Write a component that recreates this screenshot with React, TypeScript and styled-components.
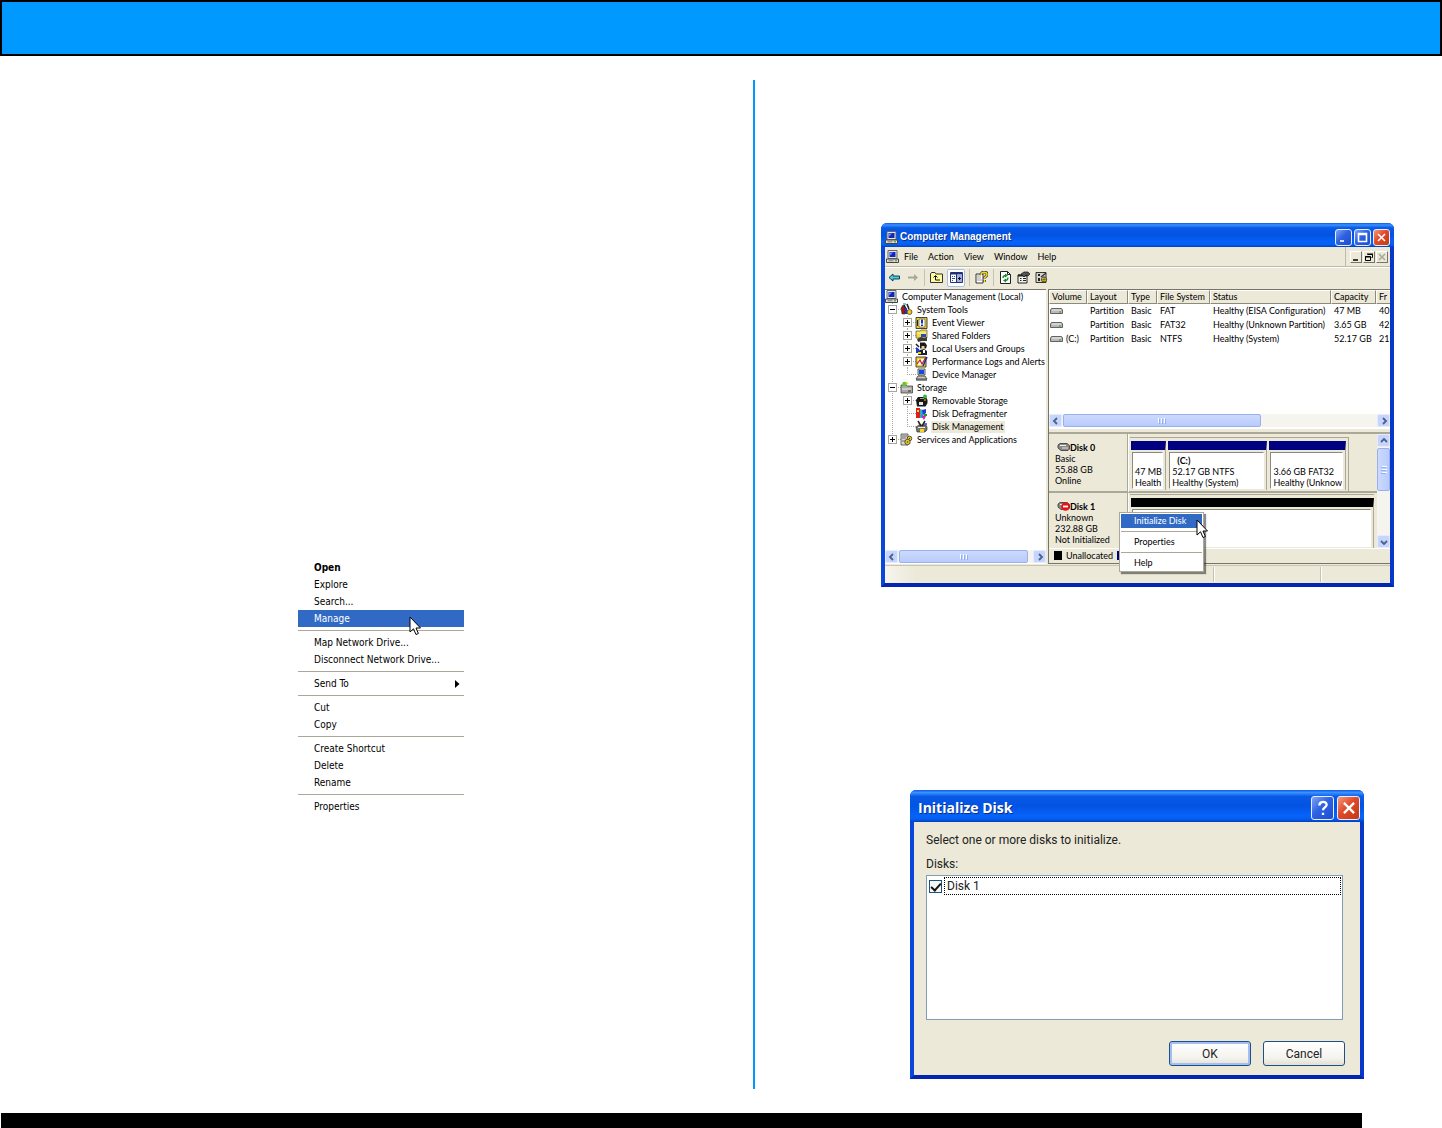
import React from 'react';
import styled, { createGlobalStyle, css } from 'styled-components';

const small = '"Lato", "Liberation Sans", sans-serif';
const beige = '#ece9d8';
const navy = '#000080';
const selected = '#316ac5';

const GlobalStyle = createGlobalStyle`
  * { box-sizing: border-box; }
  body { margin: 0; background: #fff; color: #000; font-family: ${small}; font-variant-ligatures: none; }
  button { font: inherit; font-variant-ligatures: none; color: inherit; padding: 0; margin: 0; border: 0; background: none; text-align: left; }
  ul { list-style: none; margin: 0; padding: 0; }
  h2, p { margin: 0; }
  svg { display: block; flex: none; }
`;

/* ---------- page ---------- */

const Banner = styled.header`
  height: 56px;
  background: #0099ff;
  border: 2px solid #000;
`;

const Columns = styled.main`
  display: grid;
  grid-template-columns: 753fr 2px 687fr;
  margin-top: 24px;
`;

const Divider = styled.div`
  background: #0099ff;
`;

const LeftColumn = styled.section`
  padding: 479px 0 0 298px;
`;

const RightColumn = styled.section`
  display: flex;
  flex-direction: column;
  gap: 203px;
  padding: 143px 48px 10px 126px;
`;

const FooterBar = styled.footer`
  height: 15px;
  margin: 24px 80px 0 1px;
  background: #000;
`;

/* ---------- menus ---------- */

const ShortcutMenu = styled.ul`
  width: 166px;
  font: 10px/17px "DejaVu Sans Condensed", "DejaVu Sans", sans-serif;
`;

const MenuItem = styled.button<{ $active?: boolean; $strong?: boolean }>`
  display: flex;
  align-items: center;
  justify-content: space-between;
  width: 100%;
  height: 17px;
  padding: 0 4px 0 16px;
  white-space: nowrap;
  font-weight: ${p => (p.$strong ? 700 : 400)};
  ${p => p.$active && css`background: ${selected}; color: #fff;`}
`;

const MenuLine = styled.li`
  height: 7px;
  padding-top: 3px;
  &::after { content: ''; display: block; height: 1px; background: #aca899; }
`;

const CursorAnchor = styled.li`
  position: relative;
`;

const PointerSpot = styled.span<{ $x: number; $y: number }>`
  position: absolute;
  z-index: 2;
  left: ${p => p.$x}px;
  top: ${p => p.$y}px;
`;

const PopupMenu = styled.ul`
  position: absolute;
  z-index: 1;
  left: 70px;
  top: 78px;
  width: 85px;
  padding: 1px;
  background: #fff;
  border: 1px solid #aca899;
  box-shadow: 2px 2px 1px rgba(0, 0, 0, 0.45);
  line-height: 14px;
  ${MenuItem} { height: 14px; padding: 0 0 0 13px; }
`;

/* ---------- window chrome ---------- */

const Window = styled.section`
  display: flex;
  flex-direction: column;
  background: ${beige};
  border: 4px solid #0a46dc;
  border-top: 0;
  border-right-color: #0838c8;
  border-bottom-color: #0424b4;
  border-radius: 6px 6px 0 0;
  font-size: 9px;
`;

const TitleBar = styled.header<{ $large?: boolean }>`
  display: flex;
  align-items: center;
  gap: ${p => (p.$large ? 3 : 2)}px;
  height: ${p => (p.$large ? 32 : 24)}px;
  margin: 0 -4px;
  padding: ${p => (p.$large ? '3px 4px 0 8px' : '4px 4px 0 4px')};
  border-radius: 6px 6px 0 0;
  color: #fff;
  background: linear-gradient(#0a5be6 0, #3a93ff 8%, #0a5ae8 20%, #0353e3 50%, #0563fa 80%, #0560f0 90%, #0340c0 100%);
`;

const Title = styled.h2<{ $large?: boolean }>`
  flex: 1;
  font: ${p => (p.$large ? '700 14px/20px "Open Sans", "Noto Sans"' : '700 10px/16px "Liberation Sans"')}, sans-serif;
  text-shadow: 1px 1px 0 #0a2f8c;
  white-space: nowrap;
`;

const CaptionButton = styled.button<{ $close?: boolean; $large?: boolean }>`
  display: grid;
  place-items: center;
  width: ${p => (p.$large ? 23 : 17)}px;
  height: ${p => (p.$large ? 24 : 17)}px;
  border: 1px solid #e8eefc;
  border-radius: 3px;
  background: ${p => (p.$close
    ? 'linear-gradient(135deg, #f09a7c, #e0492a 45%, #c23a12)'
    : 'linear-gradient(135deg, #7ea4f6, #2f62e2 45%, #1c4fd0)')};
`;

const MenuBar = styled.nav`
  display: flex;
  align-items: center;
  height: 20px;
  padding: 0 2px 0 1px;
  border-bottom: 1px solid #bfbba8;
  box-shadow: 0 1px 0 #fff;
`;

const MenuBarItem = styled.button`
  padding: 0 5px;
  line-height: 14px;
`;

const MdiButtons = styled.div`
  display: flex;
  align-items: center;
  gap: 1px;
  height: 19px;
  margin-left: auto;
  padding-left: 4px;
  border-left: 1px solid #bfbba8;
`;

const MdiButton = styled.button`
  display: grid;
  place-items: center;
  width: 12px;
  height: 12px;
  background: ${beige};
  border: 1px solid;
  border-color: #fff #77746a #77746a #fff;
`;

const ToolBar = styled.div`
  display: flex;
  align-items: center;
  gap: 3px;
  height: 21px;
  padding-left: 2px;
`;

const ToolButton = styled.button<{ $on?: boolean }>`
  display: grid;
  place-items: center;
  width: ${p => (p.$on ? 18 : 15)}px;
  height: 18px;
  ${p => p.$on && css`
    background: #fff;
    border: 1px solid #a9bfe4;
    border-radius: 2px;
  `}
`;

const ToolLine = styled.span`
  width: 1px;
  height: 17px;
  margin: 0 1px;
  background: #c5c2b2;
`;

const Panes = styled.div`
  display: grid;
  grid-template-columns: 161px minmax(0, 1fr);
  column-gap: 2px;
  height: 275px;
  margin-top: 1px;
`;

const StatusBar = styled.footer`
  display: grid;
  grid-template-columns: 1fr 107px 69px;
  height: 18px;
  margin-top: 1px;
  border-top: 1px solid #c8c5b4;
  background: linear-gradient(90deg, #f6f5ee, ${beige} 30px);
`;

const StatusCell = styled.span`
  margin: 1px 0;
  border-right: 1px solid #c5c2b2;
  box-shadow: 1px 0 0 #fff;
  &:last-child { border: 0; box-shadow: none; }
`;

/* ---------- scroll bars ---------- */

const ScrollTrack = styled.div<{ $vertical?: boolean }>`
  display: flex;
  flex: none;
  gap: 1px;
  flex-direction: ${p => (p.$vertical ? 'column' : 'row')};
  ${p => (p.$vertical ? 'width: 13px;' : 'height: 13px;')}
  background: #f5f4ee;
`;

const ScrollButton = styled.button`
  display: grid;
  place-items: center;
  flex: none;
  width: 13px;
  height: 13px;
  background: #c6d5fd;
  border: 1px solid #e4ebfe;
  border-radius: 2px;
`;

const ScrollThumb = styled.div<{ $size: string; $vertical?: boolean }>`
  display: grid;
  place-items: center;
  flex: 0 1 ${p => p.$size};
  background: linear-gradient(${p => (p.$vertical ? '90deg' : '180deg')}, #cddafe, #b9cbfb);
  border: 1px solid #98b1ee;
  border-radius: 2px;
  svg { ${p => (p.$vertical ? 'transform: rotate(90deg);' : '')} }
`;

const ScrollSpace = styled.span`
  flex: 1;
`;

/* ---------- tree ---------- */

const TreePane = styled.div`
  display: flex;
  flex-direction: column;
  justify-content: space-between;
  min-width: 0;
  overflow: hidden;
  background: #fff;
  border-top: 1px solid #77746a;
  border-bottom: 1px solid #fff;
`;

const Branch = styled.ul`
  & & { margin-left: 15px; }
`;

const Leaf = styled.li<{ $root?: boolean }>`
  ${p => !p.$root && css`
    background:
      repeating-linear-gradient(#a8a8a8 0 1px, transparent 1px 2px) 7px 0 / 1px 100% no-repeat,
      repeating-linear-gradient(90deg, #a8a8a8 0 1px, transparent 1px 2px) 7px 6px / 9px 1px no-repeat;
    &:last-child {
      background:
        repeating-linear-gradient(#a8a8a8 0 1px, transparent 1px 2px) 7px 0 / 1px 7px no-repeat,
        repeating-linear-gradient(90deg, #a8a8a8 0 1px, transparent 1px 2px) 7px 6px / 9px 1px no-repeat;
    }
  `}
`;

const TreeRow = styled.div<{ $root?: boolean }>`
  display: flex;
  align-items: center;
  gap: 3px;
  height: 13px;
  padding-left: ${p => (p.$root ? 0 : 3)}px;
`;

const Expander = styled.button`
  display: grid;
  place-items: center;
  flex: none;
  width: 9px;
  height: 9px;
  background: #fff;
  border: 1px solid #a8a69c;
`;

const ExpanderGap = styled.span`
  flex: none;
  width: 9px;
`;

const TreeLabel = styled.button<{ $active?: boolean }>`
  height: 12px;
  padding: 0 1px;
  line-height: 12px;
  white-space: nowrap;
  ${p => p.$active && css`background: ${beige};`}
`;

/* ---------- volume list ---------- */

const RightPane = styled.div`
  display: flex;
  flex-direction: column;
  min-width: 0;
  border: 1px solid #77746a;
  border-width: 1px 0 1px 1px;
`;

const VolumeArea = styled.div`
  flex: 1;
  overflow: hidden;
  background: #fff;
`;

const VolumeTable = styled.table`
  width: 100%;
  table-layout: fixed;
  border-collapse: separate;
  border-spacing: 0;
  text-align: left;
  white-space: nowrap;
`;

const Head = styled.th`
  height: 14px;
  padding: 0 0 0 2px;
  overflow: hidden;
  font-weight: 400;
  line-height: 12px;
  background: ${beige};
  border: 1px solid;
  border-color: #fff #8d8a7c #8d8a7c #fff;
  &:last-child { border-right: 0; }
`;

const Cell = styled.td`
  height: 14px;
  padding: 0 0 0 3px;
  overflow: hidden;
  line-height: 14px;
  &:first-child { padding-left: 1px; }
`;

const VolumeName = styled.span`
  display: flex;
  align-items: center;
  gap: 3px;
`;

const Splitter = styled.div`
  height: 7px;
  background: ${beige};
  border-top: 2px solid #fff;
  border-bottom: 2px solid #aca899;
`;

/* ---------- disk map ---------- */

const DiskMap = styled.div`
  position: relative;
  display: flex;
  height: 114px;
`;

const DiskRows = styled.div`
  flex: 1;
  min-width: 0;
`;

const DiskRow = styled.div<{ $last?: boolean }>`
  display: grid;
  grid-template-columns: 79px minmax(0, 1fr);
  height: ${p => (p.$last ? 55 : 59)}px;
  border-bottom: ${p => (p.$last ? 0 : 2)}px solid #aca899;
`;

const DiskInfo = styled.div`
  padding: 8px 0 0 6px;
  line-height: 11px;
  border-right: 1px solid #aca899;
  box-shadow: 1px 0 0 #fff;
  white-space: nowrap;
`;

const DiskName = styled.strong`
  display: flex;
  align-items: center;
  padding-left: 2px;
`;

const Partitions = styled.div<{ $full?: boolean }>`
  display: flex;
  gap: 2px;
  margin: ${p => (p.$full ? '1px 3px 0 2px' : '3px 28px 0 2px')};
  padding: ${p => (p.$full ? '3px 0 0 1px' : '3px 2px 2px 1px')};
  border-top: 1px solid #aca899;
  ${p => !p.$full && css`border-right: 1px solid #aca899;`}
`;

const Partition = styled.div<{ $grow: number; $free?: boolean }>`
  display: flex;
  flex-direction: column;
  flex: ${p => p.$grow} 1 0;
  min-width: 0;
  border-top: 9px solid ${p => (p.$free ? '#000' : navy)};
  border-right: 1px solid #aca899;
`;

const PartitionBox = styled.div`
  flex: 1;
  margin: 2px 2px 1px 1px;
  padding: 2px 0 0 2px;
  overflow: hidden;
  background: #fff;
  border: 1px solid;
  border-color: #8d8a7c #fff #fff #8d8a7c;
  line-height: 11px;
  white-space: nowrap;
`;

const PartitionLine = styled.div<{ $bold?: boolean }>`
  min-height: 11px;
  padding-left: ${p => (p.$bold ? 5 : 0)}px;
  font-weight: ${p => (p.$bold ? 700 : 400)};
`;

const Legend = styled.div`
  display: flex;
  align-items: center;
  gap: 4px;
  height: 15px;
  padding: 0 0 2px 5px;
  border-top: 1px solid #fff;
`;

const Swatch = styled.span<{ $color: string }>`
  width: 8px;
  height: 9px;
  background: ${p => p.$color};
`;

/* ---------- initialize dialog ---------- */

const DialogSlot = styled.div`
  margin: 0 30px 0 29px;
`;

const DialogBody = styled.form`
  display: flex;
  flex-direction: column;
  padding: 9px 15px 9px 12px;
  font: 12px/18px "Roboto", "Liberation Sans", sans-serif;
  color: #222;
`;

const ListCaption = styled.p`
  margin-top: 6px;
`;

const DiskList = styled.div`
  height: 145px;
  margin: 2px 2px 0 0;
  padding: 1px;
  background: #fff;
  border: 1px solid #7f9db9;
`;

const DiskOption = styled.label`
  display: flex;
  align-items: center;
  gap: 2px;
  height: 18px;
  padding-left: 1px;
`;

const Tick = styled.input`
  appearance: none;
  flex: none;
  width: 13px;
  height: 13px;
  margin: 0;
  border: 1px solid #1c5180;
  background: #f6f6f2;
  &:checked::after {
    content: '';
    display: block;
    width: 8px;
    height: 4px;
    margin: 2px 0 0 1px;
    border: solid #111;
    border-width: 0 0 2px 2px;
    transform: rotate(-48deg);
  }
`;

const FocusText = styled.span`
  flex: 1;
  height: 18px;
  padding-left: 2px;
  border: 1px dotted #000;
  line-height: 17px;
`;

const Actions = styled.div`
  display: flex;
  justify-content: flex-end;
  gap: 12px;
  margin-top: 21px;
`;

const PushButton = styled.button<{ $primary?: boolean }>`
  width: 82px;
  height: 25px;
  text-align: center;
  background: linear-gradient(#fff, #f4f3ee 70%, #e2dfd2);
  border: 1px solid #1f4f86;
  border-radius: 3px;
  ${p => p.$primary && css`box-shadow: inset 0 0 0 2px #a3bff2;`}
`;

/* ---------- drawings ---------- */

const Pointer = () => (
  <svg width="12" height="20" viewBox="0 0 12 20">
    <path d="M1 1v15l3.5-3.2L7 18.5l2.4-1L7 12h4.5z" fill="#fff" stroke="#000" strokeWidth="1" />
  </svg>
);

const Arrow = ({ dir, color = '#4d6185' }: { dir: 'l' | 'r' | 'u' | 'd'; color?: string }) => {
  const d = { l: 'M5 1 2 4l3 3', r: 'M3 1l3 3-3 3', u: 'M1 5l3-3 3 3', d: 'M1 3l3 3 3-3' }[dir];
  return <svg width="8" height="8" viewBox="0 0 8 8"><path d={d} fill="none" stroke={color} strokeWidth="1.8" /></svg>;
};

const Grip = () => (
  <svg width="8" height="6" viewBox="0 0 8 6"><path d="M.5 0v5M3.500 0v5M6.500 0v5" stroke="#fff" /><path d="M1.500 1v5M4.500 1v5M7.500 1v5" stroke="#8cb0f8" /></svg>
);

type IconName = 'pc' | 'tools' | 'event' | 'share' | 'users' | 'perf' | 'device' | 'storage' | 'removable' | 'defrag' | 'disk' | 'services';

const Glyph = ({ name }: { name: IconName }) => {
  const art: Record<IconName, React.ReactNode> = {
    pc: (
      <>
        <path d="M2 .5h9v8H2z" fill="#e8e8e0" stroke="#666" />
        <path d="M3.500 2h6v5h-6z" fill="#1028c0" />
        <path d="M4 2.500h3l-3 3z" fill="#6d8cff" />
        <path d="M.5 9h12v3.500H.5z" fill="#e6e3d8" stroke="#444" />
        <path d="M2.500 10.800h5" stroke="#777" /><path d="M9 10.800h2" stroke="#1a8c1a" />
      </>
    ),
    device: (
      <>
        <path d="M3 1h7v6H3z" fill="#ddd" stroke="#333" strokeWidth=".8" /><path d="M4 2h5v4H4z" fill="#1848e0" />
        <path d="M3 8h7l2 3H1z" fill="#c9c6b8" stroke="#333" strokeWidth=".8" /><path d="M1 12h11" stroke="#222" />
      </>
    ),
    tools: (
      <>
        <path d="M1 5l2-3 2 3v6H2z" fill="#a01818" stroke="#222" strokeWidth=".5" />
        <path d="M4 2l4 8M7 1l2 5" stroke="#222" strokeWidth="1.600" /><path d="M5 5h2v6H5z" fill="#1c36c8" />
        <circle cx="9.500" cy="9" r="2.500" fill="#f0c814" stroke="#333" strokeWidth=".7" /><path d="M3 1h3" stroke="#39b8c8" strokeWidth="1.500" />
      </>
    ),
    event: (
      <>
        <path d="M1 1.500h11v11H1z" fill="#f2d41c" stroke="#333" strokeWidth=".9" /><path d="M4 3h6v8H4z" fill="#fff" stroke="#444" strokeWidth=".6" />
        <path d="M7 3.500v4" stroke="#1830d8" strokeWidth="2" /><path d="M7 8.500v1.500" stroke="#1830d8" strokeWidth="2" /><path d="M2.500 4v6" stroke="#222" />
      </>
    ),
    share: (
      <>
        <path d="M1 2h4l1-1h6v8H1z" fill="#f3dc3c" stroke="#666" strokeWidth=".8" /><path d="M2 4h9" stroke="#fff7a8" />
        <path d="M2 10l4-2 3 1 3-1v4H7l-4 1z" fill="#403a34" /><path d="M6 5h5v3H6z" fill="#2848c8" />
      </>
    ),
    users: (
      <>
        <path d="M5 .5h5l2 3-1 3H5z" fill="#1a1a1a" /><path d="M6.500 4h3v3h-3z" fill="#f2c49a" />
        <path d="M1 5l3 2 2 4H1z" fill="#2038c8" /><path d="M5 8l4-1 3 2v4H3z" fill="#18242c" /><path d="M8 8h2v3H8z" fill="#fff" /><path d="M1 2l3 3" stroke="#222" strokeWidth="1.500" /><path d="M3 10h3v2H3z" fill="#f2d41c" />
      </>
    ),
    perf: (
      <>
        <path d="M1 2h10v10H1z" fill="#f2d41c" stroke="#333" strokeWidth=".9" /><path d="M3 4h6v6H3z" fill="#fff" />
        <path d="M2 9l3-4 2 4 4-7" fill="none" stroke="#c81c1c" strokeWidth="1.200" /><path d="M8 11l4-9" stroke="#1c28a8" strokeWidth="1.500" />
      </>
    ),
    storage: (
      <>
        <path d="M1 4h5l1 1h5.500v7H1z" fill="#aaa9a0" stroke="#444" strokeWidth=".8" /><path d="M2 8h9" stroke="#eee" /><path d="M8 10h3" stroke="#333" />
        <circle cx="4.500" cy="3" r="2.300" fill="#5cc83c" /><path d="M6 1l2 2" stroke="#f2d41c" strokeWidth="1.500" />
      </>
    ),
    removable: (
      <>
        <path d="M1 6l2-3h8l1.500 3v3l-2 3.500H2z" fill="#181818" /><path d="M4 8h4v3H4z" fill="#e4e4dc" /><path d="M5 4.500h4" stroke="#999" />
        <circle cx="10" cy="2.500" r="2" fill="#38b838" /><path d="M9 6h2" stroke="#f2d41c" />
      </>
    ),
    defrag: (
      <>
        <path d="M1 1h4v10H1z" fill="#e01c1c" /><path d="M5 2l3 1v8H5z" fill="#1cb4c8" /><path d="M7 3l4-1v4L8 8z" fill="#2838d8" />
        <path d="M6 8l5 1-2 4z" fill="#d41cb4" /><path d="M2 3h2v2H2z" fill="#ffe41c" /><path d="M9 7h3v2H9z" fill="#1c9c1c" />
      </>
    ),
    disk: (
      <>
        <path d="M1 7l3-2h7l1 2v3l-2 2H2z" fill="#77756c" stroke="#222" strokeWidth=".6" /><path d="M3 7.500h7" stroke="#e8e8e8" />
        <path d="M3 1l3 5M10 1L7 6" stroke="#222" strokeWidth="1.500" /><path d="M5 9h4v3H5z" fill="#f2d41c" /><path d="M9 4h3" stroke="#2848d8" strokeWidth="1.500" />
      </>
    ),
    services: (
      <>
        <path d="M1 1h7v11H1z" fill="#d8d6ca" stroke="#444" strokeWidth=".8" /><path d="M2 3h5M2 5h4M2 8h3" stroke="#555" strokeWidth=".8" />
        <circle cx="9.500" cy="5.500" r="2.300" fill="#f2d41c" stroke="#333" strokeWidth=".8" /><circle cx="7.500" cy="9" r="2.700" fill="#f2d41c" stroke="#333" strokeWidth=".8" />
        <circle cx="7.500" cy="9" r=".8" fill="#333" /><circle cx="9.500" cy="5.500" r=".7" fill="#333" />
      </>
    ),
  };
  return <svg width="13" height="13" viewBox="0 0 13 13">{art[name]}</svg>;
};

const Drive = () => (
  <svg width="13" height="8" viewBox="0 0 13 8">
    <path d="M1.500 1.500h10l1 1.500v3.500H.5V3z" fill="#b8b8b4" stroke="#555" strokeWidth=".9" />
    <path d="M2 3h9" stroke="#eee" /><path d="M9 5h2" stroke="#3a9a3a" />
  </svg>
);

const DiskBadge = ({ error }: { error?: boolean }) => (
  <svg width="13" height="9" viewBox="0 0 13 9">
    <path d="M1 2l2-1.500h7l2.500 2V6L11 7.500H4L1 5z" fill="#8a8a88" stroke="#333" strokeWidth=".8" />
    <path d="M3 2.500h6" stroke="#eee" />
    {error
      ? <><ellipse cx="8.500" cy="4.500" rx="4.300" ry="4.300" fill="#e61414" /><path d="M6 4.500h5" stroke="#fff" strokeWidth="1.800" /></>
      : <path d="M5 5h6" stroke="#ddd" />}
  </svg>
);

const ToolGlyph = ({ kind }: { kind: 'back' | 'next' | 'up' | 'panes' | 'help' | 'refresh' | 'props' | 'settings' }) => {
  const art = {
    back: <path d="M1 6.500L5 3v2h6.500v3H5v2z" fill="#3fd0d8" stroke="#0c2c50" strokeWidth=".9" />,
    next: <path d="M12 6.500L8 3v2.500H2v2h6V10z" fill="#a9a79b" />,
    up: <><path d="M.5 11.500V3l1-1.500H5L6 3h6.500v8.500z" fill="#fff9a0" stroke="#333" strokeWidth="1" /><path d="M5.500 9V5M3.500 6.500l2-2 2 2M5.500 9H10" fill="none" stroke="#111" /></>,
    panes: <><path d="M.5 1.500h12v10H.5z" fill="#fff" stroke="#22307c" /><path d="M1 2.500h11" stroke="#22307c" strokeWidth="2" /><path d="M6.500 3v8" stroke="#22307c" /><path d="M2 5.500h1M4 5.500h1M2 7.500h3M2 9.500h1" stroke="#3a4a9c" /><path d="M7 4h5v7H7z" fill="#a4aede" /><path d="M8 7.500h3M9.500 6v3" stroke="#111" /></>,
    help: <><path d="M1 3h7v9H1z" fill="#fff" stroke="#333" /><path d="M2 5h4M2 7h4M2 9h5" stroke="#888" strokeWidth=".8" /><path d="M6 4c0-4 6-3.500 6-.5 0 2-2.500 1.800-2.500 4M9.500 9v2" fill="none" stroke="#333" strokeWidth="2.800" /><path d="M6 4c0-4 6-3.500 6-.5 0 2-2.500 1.800-2.500 4M9.500 9v2" fill="none" stroke="#f4dc1c" strokeWidth="1.500" /></>,
    refresh: <><path d="M1.500.5h7l3 3v9h-10z" fill="#fff" stroke="#222" /><path d="M8.500.5v3h3" fill="none" stroke="#222" /><path d="M4 7c0-2 1-2.500 3-2.500M9 6.500c0 2-1 3-3 3" fill="none" stroke="#178c2c" strokeWidth="1.300" /><path d="M6 2.500l3 2-3 2zM7 7.500l-3 2 3 2z" fill="#178c2c" /></>,
    props: <><path d="M1 4h9v8H1z" fill="#f4f4ec" stroke="#222" /><path d="M1 4.500h9" stroke="#222" strokeWidth="2" /><path d="M3 7.500h1.500M6 7.500h3M3 9.500h1.500M6 9.500h3" stroke="#222" /><path d="M4 3l3-2h4l2 2-2 2-2-1-2 2z" fill="#555" stroke="#111" strokeWidth=".7" /></>,
    settings: <><path d="M1 1.500h10v10H1z" fill="#d8d6ca" stroke="#333" /><path d="M3 3h2v2H3zM3 7h2v3H3z" fill="#222" /><path d="M6 6l5-4" stroke="#333" strokeWidth="1.500" /><circle cx="9" cy="8.500" r="2.600" fill="#f0d820" stroke="#333" strokeWidth=".8" /><path d="M6 9l6-1M9 5.500v6" stroke="#333" strokeWidth=".6" /></>,
  };
  return <svg width="13" height="13" viewBox="0 0 13 13">{art[kind]}</svg>;
};

const CaptionGlyph = ({ kind, size }: { kind: 'min' | 'max' | 'close' | 'help'; size: number }) => {
  const d = {
    min: 'M2 9h4',
    max: 'M1.500 1.500h8v8h-8zM1.500 2.500h8',
    close: 'M2 2l7 7M9 2l-7 7',
    help: 'M3 3.800c0-3.300 5-3.300 5-.5 0 1.800-2.500 1.800-2.500 3.700M5.500 8.700v1.600',
  }[kind];
  return <svg width={size} height={size} viewBox="0 0 11 11"><path d={d} fill="none" stroke="#fff" strokeWidth="1.600" /></svg>;
};

/* ---------- data ---------- */

type Node = { label: string; icon: IconName; mark?: '+' | '-'; active?: boolean; children?: Node[] };

const tree: Node = {
  label: 'Computer Management (Local)', icon: 'pc', children: [
    {
      label: 'System Tools', icon: 'tools', mark: '-', children: [
        { label: 'Event Viewer', icon: 'event', mark: '+' },
        { label: 'Shared Folders', icon: 'share', mark: '+' },
        { label: 'Local Users and Groups', icon: 'users', mark: '+' },
        { label: 'Performance Logs and Alerts', icon: 'perf', mark: '+' },
        { label: 'Device Manager', icon: 'device' },
      ],
    },
    {
      label: 'Storage', icon: 'storage', mark: '-', children: [
        { label: 'Removable Storage', icon: 'removable', mark: '+' },
        { label: 'Disk Defragmenter', icon: 'defrag' },
        { label: 'Disk Management', icon: 'disk', active: true },
      ],
    },
    { label: 'Services and Applications', icon: 'services', mark: '+' },
  ],
};

const volumes = [
  ['', 'Partition', 'Basic', 'FAT', 'Healthy (EISA Configuration)', '47 MB', '40'],
  ['', 'Partition', 'Basic', 'FAT32', 'Healthy (Unknown Partition)', '3.65 GB', '42'],
  ['(C:)', 'Partition', 'Basic', 'NTFS', 'Healthy (System)', '52.17 GB', '21'],
];

const volumeColumns: [string, number?][] = [
  ['Volume', 38], ['Layout', 41], ['Type', 29], ['File System', 53], ['Status', 121], ['Capacity', 45], ['Fr'],
];

const shortcutGroups = [
  ['Open', 'Explore', 'Search...', 'Manage'],
  ['Map Network Drive...', 'Disconnect Network Drive...'],
  ['Send To'],
  ['Cut', 'Copy'],
  ['Create Shortcut', 'Delete', 'Rename'],
  ['Properties'],
];

/* ---------- pieces ---------- */

const TreeItem = ({ node, root }: { node: Node; root?: boolean }) => (
  <Leaf $root={root}>
    <TreeRow $root={root}>
      {node.mark && (
        <Expander aria-label={node.mark === '+' ? 'Expand' : 'Collapse'}>
          <svg width="5" height="5" viewBox="0 0 5 5"><path d={node.mark === '+' ? 'M0 2.500h5M2.500 0v5' : 'M0 2.500h5'} stroke="#000" /></svg>
        </Expander>
      )}
      {!node.mark && !root && <ExpanderGap />}
      <Glyph name={node.icon} />
      <TreeLabel $active={node.active}>{node.label}</TreeLabel>
    </TreeRow>
    {node.children && !root && <Branch>{node.children.map(c => <TreeItem key={c.label} node={c} />)}</Branch>}
  </Leaf>
);

const ShortcutList = () => (
  <ShortcutMenu>
    {shortcutGroups.map((group, g) => (
      <React.Fragment key={group[0]}>
        {g > 0 && <MenuLine role="separator" />}
        {group.map(label => (
          <CursorAnchor key={label}>
            <MenuItem $strong={label === 'Open'} $active={label === 'Manage'}>
              {label}
              {label === 'Send To' && <svg width="5" height="8" viewBox="0 0 5 8"><path d="M0 0l4.500 4L0 8z" /></svg>}
            </MenuItem>
            {label === 'Manage' && <PointerSpot $x={111} $y={6}><Pointer /></PointerSpot>}
          </CursorAnchor>
        ))}
      </React.Fragment>
    ))}
  </ShortcutMenu>
);

const ManagementWindow = () => (
  <Window>
    <TitleBar>
      <Glyph name="pc" />
      <Title>Computer Management</Title>
      <CaptionButton aria-label="Minimize"><CaptionGlyph kind="min" size={11} /></CaptionButton>
      <CaptionButton aria-label="Maximize"><CaptionGlyph kind="max" size={11} /></CaptionButton>
      <CaptionButton $close aria-label="Close"><CaptionGlyph kind="close" size={11} /></CaptionButton>
    </TitleBar>
    <MenuBar>
      <Glyph name="pc" />
      {['File', 'Action', 'View', 'Window', 'Help'].map(m => <MenuBarItem key={m}>{m}</MenuBarItem>)}
      <MdiButtons>
        <MdiButton aria-label="Minimize pane"><svg width="8" height="8"><path d="M1 7h5" stroke="#000" strokeWidth="1.500" /></svg></MdiButton>
        <MdiButton aria-label="Restore pane"><svg width="8" height="8"><path d="M2.500 1.500h5v3h-1M.5 3.500h5v4h-5zM2 1h6M0 4h6" fill="none" stroke="#000" /></svg></MdiButton>
        <MdiButton aria-label="Close pane"><svg width="8" height="8"><path d="M1 1l6 6M7 1L1 7" stroke="#aca899" strokeWidth="1.500" /></svg></MdiButton>
      </MdiButtons>
    </MenuBar>
    <ToolBar>
      <ToolButton aria-label="Back"><ToolGlyph kind="back" /></ToolButton>
      <ToolButton aria-label="Forward"><ToolGlyph kind="next" /></ToolButton>
      <ToolLine />
      <ToolButton aria-label="Up one level"><ToolGlyph kind="up" /></ToolButton>
      <ToolButton $on aria-label="Show tree"><ToolGlyph kind="panes" /></ToolButton>
      <ToolLine />
      <ToolButton aria-label="Help"><ToolGlyph kind="help" /></ToolButton>
      <ToolLine />
      <ToolButton aria-label="Refresh"><ToolGlyph kind="refresh" /></ToolButton>
      <ToolButton aria-label="Properties"><ToolGlyph kind="props" /></ToolButton>
      <ToolButton aria-label="Settings"><ToolGlyph kind="settings" /></ToolButton>
    </ToolBar>
    <Panes>
      <TreePane>
        <Branch>
          <TreeItem node={tree} root />
          {tree.children!.map(c => <TreeItem key={c.label} node={c} />)}
        </Branch>
        <ScrollTrack>
          <ScrollButton aria-label="Scroll left"><Arrow dir="l" /></ScrollButton>
          <ScrollThumb $size="129px"><Grip /></ScrollThumb>
          <ScrollSpace />
          <ScrollButton aria-label="Scroll right"><Arrow dir="r" /></ScrollButton>
        </ScrollTrack>
      </TreePane>
      <RightPane>
        <VolumeArea>
          <VolumeTable>
            <colgroup>{volumeColumns.map(([name, w]) => <col key={name} width={w} />)}</colgroup>
            <thead><tr>{volumeColumns.map(([name]) => <Head key={name}>{name}</Head>)}</tr></thead>
            <tbody>
              {volumes.map((row, r) => (
                <tr key={r}>
                  {row.map((text, c) => (
                    <Cell key={c}>{c === 0 ? <VolumeName><Drive />{text}</VolumeName> : text}</Cell>
                  ))}
                </tr>
              ))}
            </tbody>
          </VolumeTable>
        </VolumeArea>
        <ScrollTrack>
          <ScrollButton aria-label="Scroll left"><Arrow dir="l" /></ScrollButton>
          <ScrollThumb $size="198px"><Grip /></ScrollThumb>
          <ScrollSpace />
          <ScrollButton aria-label="Scroll right"><Arrow dir="r" /></ScrollButton>
        </ScrollTrack>
        <Splitter />
        <DiskMap>
          <DiskRows>
            <DiskRow>
              <DiskInfo>
                <DiskName><DiskBadge />Disk 0</DiskName>
                <div>Basic</div><div>55.88 GB</div><div>Online</div>
              </DiskInfo>
              <Partitions>
                <Partition $grow={35}><PartitionBox>
                  <PartitionLine /><PartitionLine>47 MB</PartitionLine><PartitionLine>Health</PartitionLine>
                </PartitionBox></Partition>
                <Partition $grow={100}><PartitionBox>
                  <PartitionLine $bold>(C:)</PartitionLine><PartitionLine>52.17 GB NTFS</PartitionLine><PartitionLine>Healthy (System)</PartitionLine>
                </PartitionBox></Partition>
                <Partition $grow={77}><PartitionBox>
                  <PartitionLine /><PartitionLine>3.66 GB FAT32</PartitionLine><PartitionLine>Healthy (Unknow</PartitionLine>
                </PartitionBox></Partition>
              </Partitions>
            </DiskRow>
            <DiskRow $last>
              <DiskInfo>
                <DiskName><DiskBadge error />Disk 1</DiskName>
                <div>Unknown</div><div>232.88 GB</div><div>Not Initialized</div>
              </DiskInfo>
              <Partitions $full>
                <Partition $grow={1} $free><PartitionBox /></Partition>
              </Partitions>
            </DiskRow>
          </DiskRows>
          <ScrollTrack $vertical>
            <ScrollButton aria-label="Scroll up"><Arrow dir="u" /></ScrollButton>
            <ScrollThumb $vertical $size="43px"><Grip /></ScrollThumb>
            <ScrollSpace />
            <ScrollButton aria-label="Scroll down"><Arrow dir="d" /></ScrollButton>
          </ScrollTrack>
          <PopupMenu>
            <CursorAnchor>
              <MenuItem $active>Initialize Disk</MenuItem>
              <PointerSpot $x={75} $y={5}><Pointer /></PointerSpot>
            </CursorAnchor>
            <MenuLine role="separator" />
            <li><MenuItem>Properties</MenuItem></li>
            <MenuLine role="separator" />
            <li><MenuItem>Help</MenuItem></li>
          </PopupMenu>
        </DiskMap>
        <Legend><Swatch $color="#000" />Unallocated<Swatch $color={navy} /></Legend>
      </RightPane>
    </Panes>
    <StatusBar><StatusCell /><StatusCell /><StatusCell /></StatusBar>
  </Window>
);

const InitializeDialog = () => (
  <DialogSlot>
    <Window>
      <TitleBar $large>
        <Title $large>Initialize Disk</Title>
        <CaptionButton $large aria-label="Help"><CaptionGlyph kind="help" size={16} /></CaptionButton>
        <CaptionButton $large $close aria-label="Close"><CaptionGlyph kind="close" size={16} /></CaptionButton>
      </TitleBar>
      <DialogBody onSubmit={e => e.preventDefault()}>
        <p>Select one or more disks to initialize.</p>
        <ListCaption id="disks">Disks:</ListCaption>
        <DiskList role="group" aria-labelledby="disks">
          <DiskOption htmlFor="disk-1">
            <Tick id="disk-1" type="checkbox" defaultChecked />
            <FocusText>Disk 1</FocusText>
          </DiskOption>
        </DiskList>
        <Actions>
          <PushButton $primary type="submit">OK</PushButton>
          <PushButton type="button">Cancel</PushButton>
        </Actions>
      </DialogBody>
    </Window>
  </DialogSlot>
);

export default function App() {
  return (
    <>
      <GlobalStyle />
      <Banner />
      <Columns>
        <LeftColumn><ShortcutList /></LeftColumn>
        <Divider />
        <RightColumn>
          <ManagementWindow />
          <InitializeDialog />
        </RightColumn>
      </Columns>
      <FooterBar />
    </>
  );
}
